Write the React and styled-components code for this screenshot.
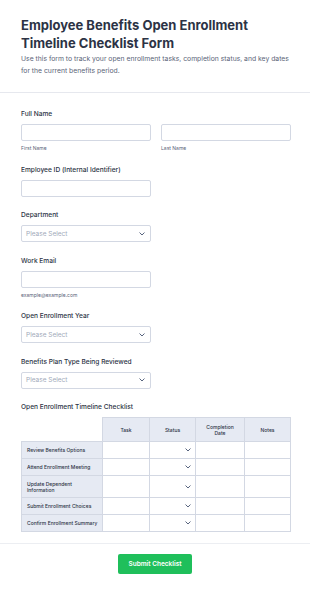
import React from 'react';
import styled, { createGlobalStyle } from 'styled-components';

const GlobalStyle = createGlobalStyle`
  html, body {
    margin: 0;
    padding: 0;
    background: #ffffff;
  }

  body {
    font-family: Inter, "Noto Sans", sans-serif;
    color: #2c3345;
  }

  * {
    box-sizing: border-box;
  }
`;

const TASKS = [
  { name: 'Review Benefits Options' },
  { name: 'Attend Enrollment Meeting' },
  { name: 'Update Dependent Information', wrap: true },
  { name: 'Submit Enrollment Choices' },
  { name: 'Confirm Enrollment Summary' },
];

const Chevron = () => (
  <svg width="6" height="4" viewBox="0 0 6 4" fill="none">
    <path d="M0.8 0.8L3 3L5.2 0.8" stroke="#57647e" strokeWidth="1" strokeLinecap="round" strokeLinejoin="round" />
  </svg>
);

const App = () => (
  <Page>
    <GlobalStyle />
    <Header>
      <Title>Employee Benefits Open Enrollment Timeline Checklist Form</Title>
      <Subtitle>
        Use this form to track your open enrollment tasks, completion status, and key dates
        for the current benefits period.
      </Subtitle>
    </Header>

    <Body>
      <Field>
        <Label>Full Name</Label>
        <NameRow>
          <div>
            <Input />
            <SubLabel>First Name</SubLabel>
          </div>
          <div>
            <Input />
            <SubLabel>Last Name</SubLabel>
          </div>
        </NameRow>
      </Field>

      <Field>
        <Label>Employee ID (Internal Identifier)</Label>
        <Input half />
      </Field>

      <Field>
        <Label>Department</Label>
        <Select>
          <span>Please Select</span>
          <Chevron />
        </Select>
      </Field>

      <Field>
        <Label>Work Email</Label>
        <Input half />
        <SubLabel>example@example.com</SubLabel>
      </Field>

      <Field>
        <Label>Open Enrollment Year</Label>
        <Select>
          <span>Please Select</span>
          <Chevron />
        </Select>
      </Field>

      <Field>
        <Label>Benefits Plan Type Being Reviewed</Label>
        <Select>
          <span>Please Select</span>
          <Chevron />
        </Select>
      </Field>

      <Field>
        <Label>Open Enrollment Timeline Checklist</Label>
        <Table>
          <thead>
            <tr>
              <Corner />
              <HeadCell>Task</HeadCell>
              <HeadCell>Status</HeadCell>
              <HeadCell>Completion<br />Date</HeadCell>
              <HeadCell>Notes</HeadCell>
            </tr>
          </thead>
          <tbody>
            {TASKS.map((task) => (
              <tr key={task.name}>
                <RowHead wrap={task.wrap}>{task.name}</RowHead>
                <Cell />
                <Cell>
                  <StatusBox>
                    <Chevron />
                  </StatusBox>
                </Cell>
                <Cell />
                <Cell />
              </tr>
            ))}
          </tbody>
        </Table>
      </Field>
    </Body>

    <Footer>
      <SubmitButton>Submit Checklist</SubmitButton>
    </Footer>
  </Page>
);

const Page = styled.div`
  width: 310px;
  min-height: 590px;
  background: #ffffff;
`;

const Header = styled.header`
  padding: 17px 21px 15px;
  border-bottom: 1px solid #e6e8ee;
`;

const Title = styled.h1`
  margin: 0;
  font-size: 13px;
  line-height: 17.5px;
  font-weight: 700;
  color: #2c3345;
`;

const Subtitle = styled.p`
  margin: 1px 0 0;
  font-size: 6.8px;
  line-height: 12px;
  color: #5a6478;
`;

const Body = styled.main`
  padding: 16px 19px 11px 21px;
  display: flex;
  flex-direction: column;
  gap: 13.5px;
`;

const Field = styled.div`
  display: flex;
  flex-direction: column;
`;

const Label = styled.label`
  font-size: 6.6px;
  line-height: 10px;
  font-weight: 500;
  color: #2c3345;
  margin-bottom: 5px;
`;

const NameRow = styled.div`
  display: grid;
  grid-template-columns: 1fr 1fr;
  gap: 10px;
`;

const Input = styled.div`
  width: ${(props) => (props.half ? '130px' : '100%')};
  height: 17px;
  border: 1px solid #d3d8e3;
  border-radius: 2px;
  background: #ffffff;
`;

const SubLabel = styled.div`
  margin-top: 4px;
  font-size: 5px;
  line-height: 6px;
  color: #5a6478;
`;

const Select = styled.div`
  width: 130px;
  height: 17px;
  border: 1px solid #d3d8e3;
  border-radius: 2px;
  padding: 0 5px 0 4px;
  display: flex;
  align-items: center;
  justify-content: space-between;
  font-size: 6.5px;
  color: #a1a9b9;
`;

const Table = styled.table`
  width: 270px;
  border-collapse: collapse;
  table-layout: fixed;
  font-size: 5px;

  th:nth-child(1) { width: 81px; }
  th:nth-child(2) { width: 47px; }
  th:nth-child(3) { width: 46px; }
  th:nth-child(4) { width: 49px; }
`;

const Corner = styled.th`
  border: none;
  background: transparent;
`;

const HeadCell = styled.th`
  height: 24px;
  background: #e6eaf3;
  border: 1px solid #d3d8e3;
  font-weight: 500;
  color: #2c3345;
  text-align: center;
  line-height: 6px;
`;

const RowHead = styled.td`
  height: ${(props) => (props.wrap ? '22px' : '17px')};
  background: #e6eaf3;
  border: 1px solid #d3d8e3;
  padding: 0 4px 0 5px;
  font-weight: 500;
  color: #2c3345;
  line-height: 6px;
  white-space: ${(props) => (props.wrap ? 'normal' : 'nowrap')};
  overflow: hidden;
  padding-right: ${(props) => (props.wrap ? '12px' : '4px')};
`;

const Cell = styled.td`
  border: 1px solid #d3d8e3;
  background: #ffffff;
`;

const StatusBox = styled.div`
  display: flex;
  justify-content: flex-end;
  align-items: center;
  padding-right: 3px;
`;

const Footer = styled.footer`
  border-top: 1px solid #eceef2;
  padding: 10px 0 17px;
  display: flex;
  justify-content: center;
`;

const SubmitButton = styled.button`
  width: 74px;
  height: 20px;
  border: none;
  border-radius: 2px;
  background: #1fbf5b;
  color: #ffffff;
  font-family: Inter, "Noto Sans", sans-serif;
  font-size: 6.5px;
  font-weight: 600;
  cursor: pointer;
`;

export default App;
